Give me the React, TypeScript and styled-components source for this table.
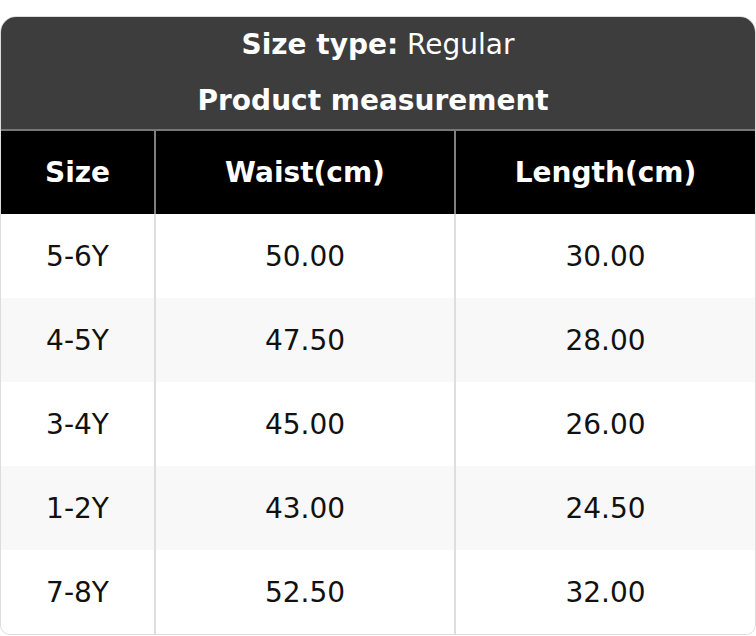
import React from "react";
import styled, { createGlobalStyle } from "styled-components";

const GlobalStyle = createGlobalStyle`
  html, body {
    margin: 0;
    padding: 0;
    background: #fff;
    font-family: "DejaVu Sans", "Liberation Sans", sans-serif;
  }
`;

const Page = styled.div`
  padding-top: 16px;
  width: 756px;
`;

const Card = styled.div`
  border: 1px solid #dcdcdc;
  border-radius: 16px 16px 10px 10px;
  overflow: hidden;
  box-sizing: border-box;
  width: 756px;
`;

const Caption = styled.div`
  background: #3d3d3d;
  color: #fff;
  text-align: center;
  font-size: 28px;
  border-bottom: 2px solid #777;
`;

const CaptionLine = styled.div`
  height: 56px;
  line-height: 56px;
  white-space: pre;
`;

const Table = styled.table`
  width: 100%;
  border-collapse: collapse;
  table-layout: fixed;
  font-size: 28px;
`;

const Th = styled.th<{ $first?: boolean }>`
  background: #000;
  color: #fff;
  font-weight: bold;
  height: 83px;
  padding: 0;
  text-align: center;
  border-left: ${(p) => (p.$first ? "none" : "2px solid #808080")};
`;

const Row = styled.tr<{ $striped: boolean }>`
  background: ${(p) => (p.$striped ? "#f8f8f8" : "#fff")};
`;

const Td = styled.td<{ $first?: boolean }>`
  height: 84px;
  padding: 0;
  text-align: center;
  color: #111;
  border-left: ${(p) => (p.$first ? "none" : "2px solid #dedede")};
`;

const rows = [
  ["5-6Y", "50.00", "30.00"],
  ["4-5Y", "47.50", "28.00"],
  ["3-4Y", "45.00", "26.00"],
  ["1-2Y", "43.00", "24.50"],
  ["7-8Y", "52.50", "32.00"],
];

export default function App() {
  return (
    <Page>
      <GlobalStyle />
      <Card>
        <Caption>
          <CaptionLine>
            <b>Size type:</b> Regular
          </CaptionLine>
          <CaptionLine>
            <b>Product measurement </b>
          </CaptionLine>
        </Caption>
        <Table>
          <colgroup>
            <col style={{ width: "154px" }} />
            <col style={{ width: "300px" }} />
            <col />
          </colgroup>
          <thead>
            <tr>
              <Th $first>Size</Th>
              <Th>Waist(cm)</Th>
              <Th>Length(cm)</Th>
            </tr>
          </thead>
          <tbody>
            {rows.map((r, i) => (
              <Row key={r[0]} $striped={i % 2 === 1}>
                <Td $first>{r[0]}</Td>
                <Td>{r[1]}</Td>
                <Td>{r[2]}</Td>
              </Row>
            ))}
          </tbody>
        </Table>
      </Card>
    </Page>
  );
}
